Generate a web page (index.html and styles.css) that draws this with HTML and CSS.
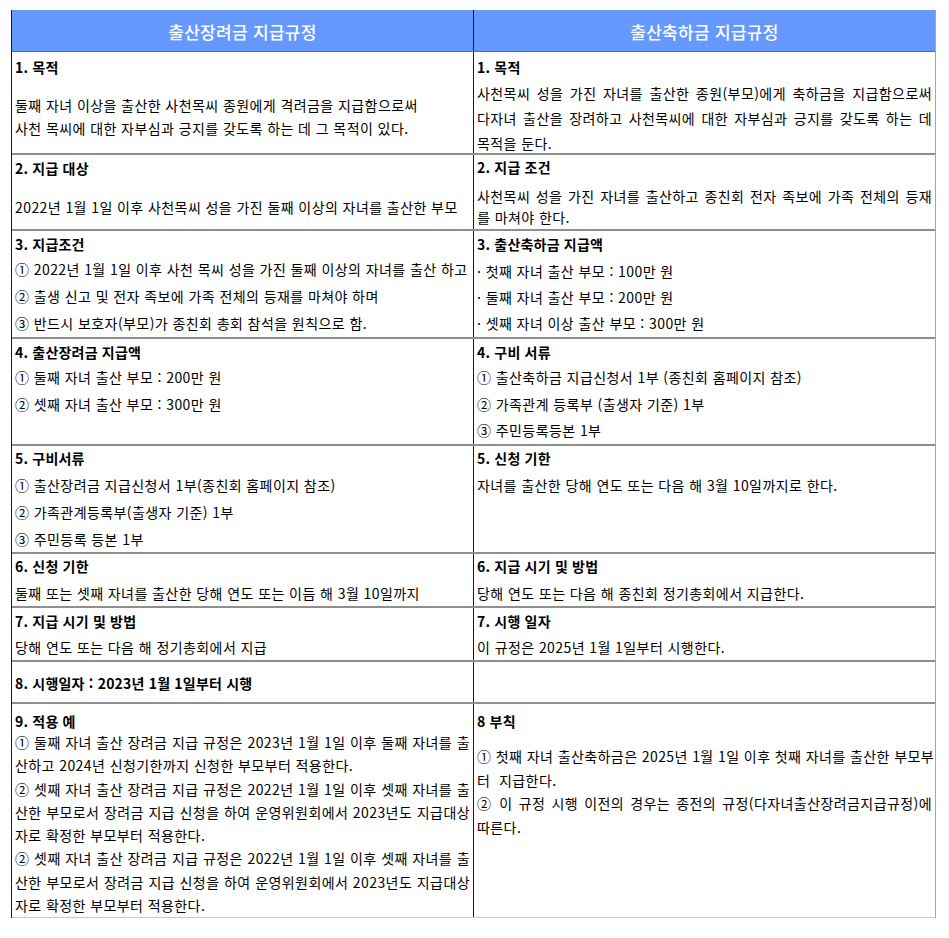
FILE: index.html
```html
<!DOCTYPE html>
<html lang="ko">
<head>
<meta charset="utf-8">
<title>출산장려금 / 출산축하금 지급규정</title>
<link rel="stylesheet" href="styles.css">
</head>
<body>
<div class="sheet">
  <div class="row head">
    <div class="cell hc">출산장려금 지급규정</div>
    <div class="cell hc">출산축하금 지급규정</div>
  </div>

  <div class="row r1">
    <div class="cell pt3">
      <div class="h">1. 목적</div>
      <div class="body l23 m15">
        <div class="ln">둘째 자녀 이상을 출산한 사천목씨 종원에게 격려금을 지급함으로써</div>
        <div class="ln">사천 목씨에 대한 자부심과 긍지를 갖도록 하는 데 그 목적이 있다.</div>
      </div>
    </div>
    <div class="cell pt3">
      <div class="h">1. 목적</div>
      <div class="body l25 m2">
        <div class="ln j">사천목씨 성을 가진 자녀를 출산한 종원(부모)에게 축하금을 지급함으로써</div>
        <div class="ln j">다자녀 출산을 장려하고 사천목씨에 대한 자부심과 긍지를 갖도록 하는 데</div>
        <div class="ln">목적을 둔다.</div>
      </div>
    </div>
  </div>

  <div class="row r2">
    <div class="cell pt1">
      <div class="h">2. 지급 대상</div>
      <div class="body l23 m155">
        <div class="ln">2022년 1월 1일 이후 사천목씨 성을 가진 둘째 이상의 자녀를 출산한 부모</div>
      </div>
    </div>
    <div class="cell pt0">
      <div class="h">2. 지급 조건</div>
      <div class="body l21 m7">
        <div class="ln j">사천목씨 성을 가진 자녀를 출산하고 종친회 전자 족보에 가족 전체의 등재</div>
        <div class="ln">를 마쳐야 한다.</div>
      </div>
    </div>
  </div>

  <div class="row r3">
    <div class="cell pt1">
      <div class="h">3. 지급조건</div>
      <div class="body l27 m0">
        <div class="ln">① 2022년 1월 1일 이후 사천 목씨 성을 가진 둘째 이상의 자녀를 출산 하고</div>
        <div class="ln">② 출생 신고 및 전자 족보에 가족 전체의 등재를 마쳐야 하며</div>
        <div class="ln">③ 반드시 보호자(부모)가 종친회 총회 참석을 원칙으로 함.</div>
      </div>
    </div>
    <div class="cell pt1">
      <div class="h">3. 출산축하금 지급액</div>
      <div class="body l26 m2">
        <div class="ln">· 첫째 자녀 출산 부모 : 100만 원</div>
        <div class="ln">· 둘째 자녀 출산 부모 : 200만 원</div>
        <div class="ln">· 셋째 자녀 이상 출산 부모 : 300만 원</div>
      </div>
    </div>
  </div>

  <div class="row r4">
    <div class="cell pt1">
      <div class="h">4. 출산장려금 지급액</div>
      <div class="body l27 m0">
        <div class="ln">① 둘째 자녀 출산 부모 : 200만 원</div>
        <div class="ln">② 셋째 자녀 출산 부모 : 300만 원</div>
      </div>
    </div>
    <div class="cell pt1">
      <div class="h">4. 구비 서류</div>
      <div class="body l265 m0">
        <div class="ln">① 출산축하금 지급신청서 1부 (종친회 홈페이지 참조)</div>
        <div class="ln">② 가족관계 등록부 (출생자 기준) 1부</div>
        <div class="ln">③ 주민등록등본 1부</div>
      </div>
    </div>
  </div>

  <div class="row r5">
    <div class="cell pt0">
      <div class="h">5. 구비서류</div>
      <div class="body l27 m15">
        <div class="ln">① 출산장려금 지급신청서 1부(종친회 홈페이지 참조)</div>
        <div class="ln">② 가족관계등록부(출생자 기준) 1부</div>
        <div class="ln">③ 주민등록 등본 1부</div>
      </div>
    </div>
    <div class="cell pt0">
      <div class="h">5. 신청 기한</div>
      <div class="body l27 m2">
        <div class="ln">자녀를 출산한 당해 연도 또는 다음 해 3월 10일까지로 한다.</div>
      </div>
    </div>
  </div>

  <div class="row r6">
    <div class="cell pt0">
      <div class="h">6. 신청 기한</div>
      <div class="body l27 m15">
        <div class="ln">둘째 또는 셋째 자녀를 출산한 당해 연도 또는 이듬 해 3월 10일까지</div>
      </div>
    </div>
    <div class="cell pt0">
      <div class="h">6. 지급 시기 및 방법</div>
      <div class="body l27 m15">
        <div class="ln">당해 연도 또는 다음 해 종친회 정기총회에서 지급한다.</div>
      </div>
    </div>
  </div>

  <div class="row r7">
    <div class="cell pt1">
      <div class="h">7. 지급 시기 및 방법</div>
      <div class="body l27 m05">
        <div class="ln">당해 연도 또는 다음 해 정기총회에서 지급</div>
      </div>
    </div>
    <div class="cell pt1">
      <div class="h">7. 시행 일자</div>
      <div class="body l27 m05">
        <div class="ln">이 규정은 2025년 1월 1일부터 시행한다.</div>
      </div>
    </div>
  </div>

  <div class="row r8">
    <div class="cell pt9">
      <div class="h">8. 시행일자 : 2023년 1월 1일부터 시행</div>
    </div>
    <div class="cell"></div>
  </div>

  <div class="row r9">
    <div class="cell pt7">
      <div class="h short">9. 적용 예</div>
      <div class="body l233 m0">
        <div class="ln j">① 둘째 자녀 출산 장려금 지급 규정은 2023년 1월 1일 이후 둘째 자녀를 출</div>
        <div class="ln">산하고 2024년 신청기한까지 신청한 부모부터 적용한다.</div>
        <div class="ln j">② 셋째 자녀 출산 장려금 지급 규정은 2022년 1월 1일 이후 셋째 자녀를 출</div>
        <div class="ln j">산한 부모로서 장려금 지급 신청을 하여 운영위원회에서 2023년도 지급대상</div>
        <div class="ln">자로 확정한 부모부터 적용한다.</div>
        <div class="ln j">② 셋째 자녀 출산 장려금 지급 규정은 2022년 1월 1일 이후 셋째 자녀를 출</div>
        <div class="ln j">산한 부모로서 장려금 지급 신청을 하여 운영위원회에서 2023년도 지급대상</div>
        <div class="ln">자로 확정한 부모부터 적용한다.</div>
      </div>
    </div>
    <div class="cell pt7">
      <div class="h short">8 부칙</div>
      <div class="body l237 m14">
        <div class="ln j">① 첫째 자녀 출산축하금은 2025년 1월 1일 이후 첫째 자녀를 출산한 부모부</div>
        <div class="ln">터&nbsp; 지급한다.</div>
        <div class="ln j">② 이 규정 시행 이전의 경우는 종전의 규정(다자녀출산장려금지급규정)에</div>
        <div class="ln">따른다.</div>
      </div>
    </div>
  </div>
</div>
</body>
</html>
```

FILE: styles.css
```css
html, body {
  margin: 0;
  padding: 0;
  background: #ffffff;
}

body {
  font-family: "Noto Sans CJK KR", "Noto Sans", sans-serif;
  font-size: 14px;
  letter-spacing: 0.42px;
  color: #000000;
}

.sheet {
  margin: 10px 0 0 11px;
  width: 925px;
  box-sizing: border-box;
  border-left: 1px solid #1a1a1a;
  border-right: 1px solid #a6a6a6;
}

.row {
  display: grid;
  grid-template-columns: 462px 461px;
  box-sizing: border-box;
  border-bottom: 2px solid #8f8f8f;
}

.cell {
  box-sizing: border-box;
  padding: 0 3px;
  overflow: hidden;
}

.cell:first-child {
  border-right: 1px solid #1a1a1a;
}

.head {
  height: 42px;
  background: #6699ff;
  border-bottom: 1px solid #3f6fc9;
}

.hc {
  display: flex;
  align-items: center;
  justify-content: center;
  padding-top: 1px;
  color: #ffffff;
  font-size: 17px;
  letter-spacing: 0.3px;
  font-weight: 500;
}

.r1 { height: 103px; }
.r2 { height: 76px; }
.r3 { height: 108px; }
.r4 { height: 107px; }
.r5 { height: 108px; }
.r6 { height: 54px; }
.r7 { height: 54px; }
.r8 { height: 42px; }
.r9 { height: 214px; border-bottom: 1px solid #c8c8c8; }

.pt0 { padding-top: 0; }
.pt1 { padding-top: 1px; }
.pt3 { padding-top: 3px; }
.pt7 { padding-top: 7px; }
.pt9 { padding-top: 9px; }

.h {
  font-weight: 700;
  line-height: 24px;
  letter-spacing: 0.2px;
  white-space: nowrap;
}

.h.short { line-height: 20px; }

.ln {
  white-space: nowrap;
}

.ln.j {
  text-align: justify;
  text-align-last: justify;
}

.l21 { line-height: 21px; }
.l23 { line-height: 23px; }
.l233 { line-height: 23.3px; }
.l237 { line-height: 23.7px; }
.l25 { line-height: 25px; }
.l26 { line-height: 26px; }
.l265 { line-height: 26.5px; }
.l27 { line-height: 27px; }

.m0 { margin-top: 0; }
.m05 { margin-top: 0.5px; }
.m15 { margin-top: 1.5px; }
.m2 { margin-top: 2px; }
.m7 { margin-top: 7px; }
.m14 { margin-top: 14px; }
.m155 { margin-top: 15.5px; }
.r1 .m15 { margin-top: 15px; }
```
